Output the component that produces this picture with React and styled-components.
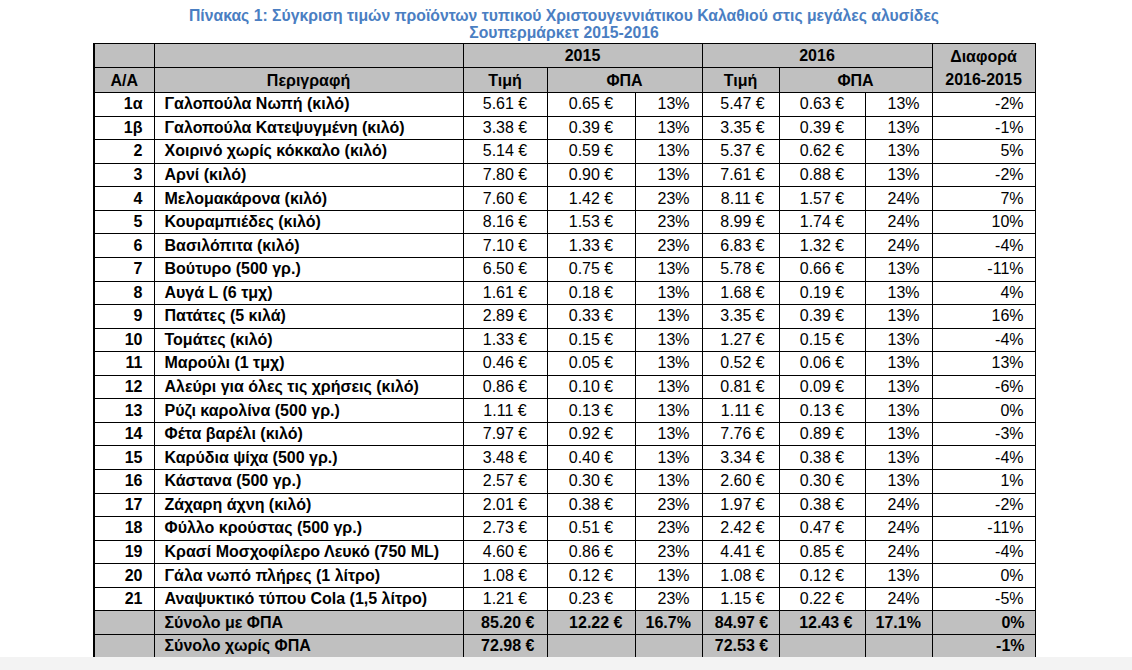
import React from 'react';
import styled, { createGlobalStyle } from 'styled-components';

const GlobalStyle = createGlobalStyle`
  html, body {
    margin: 0;
    padding: 0;
    background: #f3f3f3;
  }
  body {
    font-family: "Liberation Sans", Arial, sans-serif;
  }
`;

const Page = styled.div`
  width: 1132px;
  height: 657px;
  background: #ffffff;
  overflow: hidden;
`;

const Sheet = styled.div`
  width: 942px;
  margin-left: 93px;
  padding-top: 7px;
`;

const Title = styled.div`
  color: #4a7ec2;
  font-size: 15.75px;
  font-weight: bold;
  line-height: 17px;
  text-align: center;
  margin-bottom: 2px;
  margin-left: -40px;
  margin-right: -40px;
`;

const Table = styled.table`
  width: 942px;
  border-collapse: collapse;
  table-layout: fixed;
  font-size: 16px;
  color: #000;
  border-left: 2px solid #000;
`;

const Row = styled.tr`
  height: ${p => p.$h || 23.57}px;
`;

const Head = styled.th`
  background: #c0c0c0;
  border: 1px solid #000;
  font-weight: bold;
  text-align: center;
  padding: 0 4px;
  line-height: 23px;
`;

const Cell = styled.td`
  border: 1px solid #000;
  padding: 0 ${p => p.$pr ?? 10}px 0 ${p => p.$pl ?? 10}px;
  text-align: ${p => p.$align || 'left'};
  font-weight: ${p => (p.$bold ? 'bold' : 'normal')};
  background: ${p => (p.$total ? '#c0c0c0' : '#ffffff')};
  white-space: nowrap;
  line-height: 20px;
`;

const cols = [60, 309, 84, 88, 67, 77, 86, 67, 103];

const rows = [
  ['1α', 'Γαλοπούλα Νωπή (κιλό)', '5.61', '0.65', '13%', '5.47', '0.63', '13%', '-2%'],
  ['1β', 'Γαλοπούλα Κατεψυγμένη (κιλό)', '3.38', '0.39', '13%', '3.35', '0.39', '13%', '-1%'],
  ['2', 'Χοιρινό χωρίς κόκκαλο (κιλό)', '5.14', '0.59', '13%', '5.37', '0.62', '13%', '5%'],
  ['3', 'Αρνί (κιλό)', '7.80', '0.90', '13%', '7.61', '0.88', '13%', '-2%'],
  ['4', 'Μελομακάρονα (κιλό)', '7.60', '1.42', '23%', '8.11', '1.57', '24%', '7%'],
  ['5', 'Κουραμπιέδες (κιλό)', '8.16', '1.53', '23%', '8.99', '1.74', '24%', '10%'],
  ['6', 'Βασιλόπιτα (κιλό)', '7.10', '1.33', '23%', '6.83', '1.32', '24%', '-4%'],
  ['7', 'Βούτυρο (500 γρ.)', '6.50', '0.75', '13%', '5.78', '0.66', '13%', '-11%'],
  ['8', 'Αυγά L (6 τμχ)', '1.61', '0.18', '13%', '1.68', '0.19', '13%', '4%'],
  ['9', 'Πατάτες (5 κιλά)', '2.89', '0.33', '13%', '3.35', '0.39', '13%', '16%'],
  ['10', 'Τομάτες (κιλό)', '1.33', '0.15', '13%', '1.27', '0.15', '13%', '-4%'],
  ['11', 'Μαρούλι (1 τμχ)', '0.46', '0.05', '13%', '0.52', '0.06', '13%', '13%'],
  ['12', 'Αλεύρι για όλες τις χρήσεις (κιλό)', '0.86', '0.10', '13%', '0.81', '0.09', '13%', '-6%'],
  ['13', 'Ρύζι καρολίνα (500 γρ.)', '1.11', '0.13', '13%', '1.11', '0.13', '13%', '0%'],
  ['14', 'Φέτα βαρέλι (κιλό)', '7.97', '0.92', '13%', '7.76', '0.89', '13%', '-3%'],
  ['15', 'Καρύδια ψίχα (500 γρ.)', '3.48', '0.40', '13%', '3.34', '0.38', '13%', '-4%'],
  ['16', 'Κάστανα (500 γρ.)', '2.57', '0.30', '13%', '2.60', '0.30', '13%', '1%'],
  ['17', 'Ζάχαρη άχνη (κιλό)', '2.01', '0.38', '23%', '1.97', '0.38', '24%', '-2%'],
  ['18', 'Φύλλο κρούστας (500 γρ.)', '2.73', '0.51', '23%', '2.42', '0.47', '24%', '-11%'],
  ['19', 'Κρασί Μοσχοφίλερο Λευκό (750 ML)', '4.60', '0.86', '23%', '4.41', '0.85', '24%', '-4%'],
  ['20', 'Γάλα νωπό πλήρες (1 λίτρο)', '1.08', '0.12', '13%', '1.08', '0.12', '13%', '0%'],
  ['21', 'Αναψυκτικό τύπου Cola (1,5 λίτρο)', '1.21', '0.23', '23%', '1.15', '0.22', '24%', '-5%'],
];

const totals = [
  ['Σύνολο με ΦΠΑ', '85.20 €', '12.22 €', '16.7%', '84.97 €', '12.43 €', '17.1%', '0%'],
  ['Σύνολο χωρίς ΦΠΑ', '72.98 €', '', '', '72.53 €', '', '', '-1%'],
];

const App = () => (
  <>
    <GlobalStyle />
    <Page>
      <Sheet>
        <Title>
          Πίνακας 1: Σύγκριση τιμών προϊόντων τυπικού Χριστουγεννιάτικου Καλαθιού στις μεγάλες αλυσίδες
          <br />
          Σουπερμάρκετ 2015-2016
        </Title>
        <Table>
          <colgroup>
            {cols.map((w, i) => (
              <col key={i} style={{ width: w }} />
            ))}
          </colgroup>
          <thead>
            <Row $h={23}>
              <Head />
              <Head />
              <Head colSpan={3}>2015</Head>
              <Head colSpan={3}>2016</Head>
              <Head rowSpan={2}>
                Διαφορά
                <br />
                2016-2015
              </Head>
            </Row>
            <Row $h={25}>
              <Head>Α/Α</Head>
              <Head>Περιγραφή</Head>
              <Head>Τιμή</Head>
              <Head colSpan={2}>ΦΠΑ</Head>
              <Head>Τιμή</Head>
              <Head colSpan={2}>ΦΠΑ</Head>
            </Row>
          </thead>
          <tbody>
            {rows.map(r => (
              <Row key={r[0]}>
                <Cell $align="right" $pr={11} $bold>{r[0]}</Cell>
                <Cell $bold>{r[1]}</Cell>
                <Cell $align="center" $pl={0} $pr={0}>{r[2]} €</Cell>
                <Cell $align="center" $pl={0} $pr={0}>{r[3]} €</Cell>
                <Cell $align="right" $pr={12}>{r[4]}</Cell>
                <Cell $align="center" $pl={4} $pr={0}>{r[5]} €</Cell>
                <Cell $align="center" $pl={0} $pr={0}>{r[6]} €</Cell>
                <Cell $align="right" $pr={12}>{r[7]}</Cell>
                <Cell $align="right" $pr={11}>{r[8]}</Cell>
              </Row>
            ))}
            {totals.map(t => (
              <Row key={t[0]}>
                <Cell $total />
                <Cell $total $bold>{t[0]}</Cell>
                <Cell $total $bold $align="right" $pr={12}>{t[1]}</Cell>
                <Cell $total $bold $align="right" $pr={12}>{t[2]}</Cell>
                <Cell $total $bold $align="right" $pr={12}>{t[3]}</Cell>
                <Cell $total $bold $align="center" $pl={2} $pr={0}>{t[4]}</Cell>
                <Cell $total $bold $align="right" $pr={12}>{t[5]}</Cell>
                <Cell $total $bold $align="right" $pr={12}>{t[6]}</Cell>
                <Cell $total $bold $align="right" $pr={10}>{t[7]}</Cell>
              </Row>
            ))}
          </tbody>
        </Table>
      </Sheet>
    </Page>
  </>
);

export default App;
